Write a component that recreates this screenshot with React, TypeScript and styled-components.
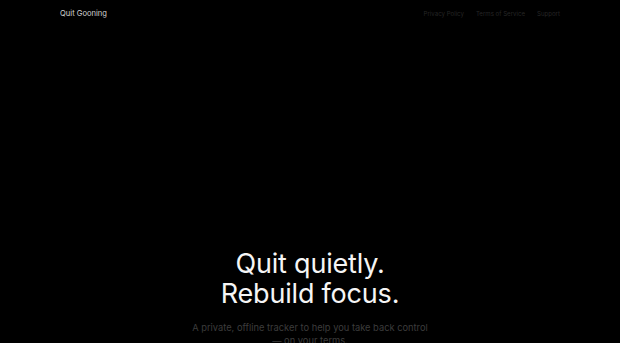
import React from 'react';
import styled, { createGlobalStyle } from 'styled-components';

const GlobalStyle = createGlobalStyle`
  html, body {
    margin: 0;
    padding: 0;
    background: #000;
  }
  body {
    font-family: Inter, "Noto Sans", sans-serif;
    -webkit-font-smoothing: antialiased;
  }
`;

const Page = styled.div`
  min-height: 343px;
  background: #000;
  overflow: hidden;
`;

const Header = styled.header`
  display: flex;
  align-items: center;
  justify-content: space-between;
  height: 27px;
  padding: 0 60px;
`;

const Brand = styled.div`
  font-size: 7.6px;
  color: #d2d2d2;
`;

const Nav = styled.nav`
  display: flex;
  gap: 12px;
`;

const NavLink = styled.a`
  font-size: 6.1px;
  color: #262626;
  text-decoration: none;
`;

const Hero = styled.section`
  display: flex;
  flex-direction: column;
  align-items: center;
  text-align: center;
  padding-top: 222px;
`;

const Title = styled.h1`
  margin: 0;
  font-size: 27px;
  font-weight: 400;
  line-height: 30px;
  color: #f5f5f5;
  letter-spacing: -0.2px;
`;

const Subtitle = styled.p`
  margin: 12px 0 0;
  max-width: 236px;
  font-size: 9.3px;
  line-height: 13px;
  color: #3c3c3c;
`;

export default function App() {
  return (
    <Page>
      <GlobalStyle />
      <Header>
        <Brand>Quit Gooning</Brand>
        <Nav>
          <NavLink href="#">Privacy Policy</NavLink>
          <NavLink href="#">Terms of Service</NavLink>
          <NavLink href="#">Support</NavLink>
        </Nav>
      </Header>
      <Hero>
        <Title>
          Quit quietly.
          <br />
          Rebuild focus.
        </Title>
        <Subtitle>A private, offline tracker to help you take back control — on your terms.</Subtitle>
      </Hero>
    </Page>
  );
}
